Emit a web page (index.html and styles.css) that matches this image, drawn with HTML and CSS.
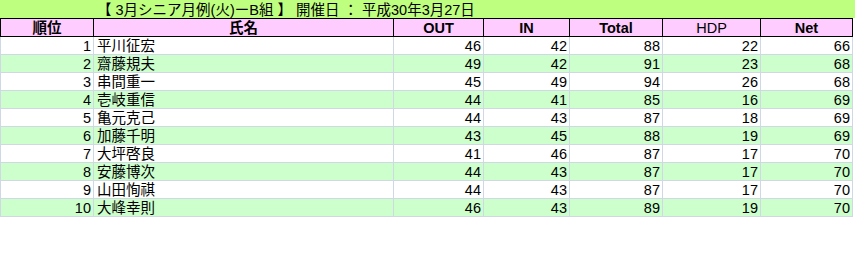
FILE: index.html
```html
<!DOCTYPE html>
<html lang="ja">
<head>
<meta charset="utf-8">
<title>3月シニア月例(火)ーB組</title>
<link rel="stylesheet" href="styles.css">
</head>
<body>
<div class="title">【 3月シニア月例(火)ーB組 】 開催日 ： 平成30年3月27日</div>
<div class="grid">
  <div class="row head">
    <div class="c first">順位</div><div class="c">氏名</div><div class="c">OUT</div><div class="c">IN</div><div class="c">Total</div><div class="c light">HDP</div><div class="c">Net</div>
  </div>
  <div class="row"><div class="c first n">1</div><div class="c name">平川征宏</div><div class="c n">46</div><div class="c n">42</div><div class="c n">88</div><div class="c n">22</div><div class="c n">66</div></div>
  <div class="row alt"><div class="c first n">2</div><div class="c name">齋藤規夫</div><div class="c n">49</div><div class="c n">42</div><div class="c n">91</div><div class="c n">23</div><div class="c n">68</div></div>
  <div class="row"><div class="c first n">3</div><div class="c name">串間重一</div><div class="c n">45</div><div class="c n">49</div><div class="c n">94</div><div class="c n">26</div><div class="c n">68</div></div>
  <div class="row alt"><div class="c first n">4</div><div class="c name">壱岐重信</div><div class="c n">44</div><div class="c n">41</div><div class="c n">85</div><div class="c n">16</div><div class="c n">69</div></div>
  <div class="row"><div class="c first n">5</div><div class="c name">亀元克己</div><div class="c n">44</div><div class="c n">43</div><div class="c n">87</div><div class="c n">18</div><div class="c n">69</div></div>
  <div class="row alt"><div class="c first n">6</div><div class="c name">加藤千明</div><div class="c n">43</div><div class="c n">45</div><div class="c n">88</div><div class="c n">19</div><div class="c n">69</div></div>
  <div class="row"><div class="c first n">7</div><div class="c name">大坪啓良</div><div class="c n">41</div><div class="c n">46</div><div class="c n">87</div><div class="c n">17</div><div class="c n">70</div></div>
  <div class="row alt"><div class="c first n">8</div><div class="c name">安藤博次</div><div class="c n">44</div><div class="c n">43</div><div class="c n">87</div><div class="c n">17</div><div class="c n">70</div></div>
  <div class="row"><div class="c first n">9</div><div class="c name">山田恂祺</div><div class="c n">44</div><div class="c n">43</div><div class="c n">87</div><div class="c n">17</div><div class="c n">70</div></div>
  <div class="row alt"><div class="c first n">10</div><div class="c name">大峰幸則</div><div class="c n">46</div><div class="c n">43</div><div class="c n">89</div><div class="c n">19</div><div class="c n">70</div></div>
</div>
</body>
</html>
```

FILE: styles.css
```css
html, body {
  margin: 0;
  padding: 0;
  background: #ffffff;
}
body {
  font-family: "Liberation Sans", "Noto Sans CJK JP", sans-serif;
  font-size: 14.5px;
  color: #000000;
}
.title {
  height: 18px;
  box-sizing: border-box;
  padding: 2px 0 0 97px;
  line-height: 16px;
  background: #bfff80;
  white-space: nowrap;
  overflow: hidden;
}
.grid {
  display: grid;
  grid-template-columns: 94px 300px 90px 86px 93px 98px 92px;
  width: 853px;
}
.row {
  display: contents;
}
.c {
  box-sizing: border-box;
  height: 18px;
  padding: 2px 2px 0 2px;
  line-height: 15px;
  border-right: 1px solid #d0d7e5;
  border-bottom: 1px solid #d0d7e5;
  background: #ffffff;
  white-space: nowrap;
  overflow: hidden;
}
.c.first {
  border-left: 1px solid #d0d7e5;
}
.alt .c {
  background: #ccffcc;
}
.n {
  text-align: right;
}
.name {
  text-align: left;
  padding-left: 3px;
}
.head .c {
  height: 19px;
  background: #ffccff;
  border-top: 1px solid #000000;
  border-right-color: #000000;
  border-bottom-color: #000000;
  text-align: center;
  font-weight: bold;
}
.head .c.first {
  border-left-color: #000000;
}
.head .c.light {
  font-weight: normal;
}
```
